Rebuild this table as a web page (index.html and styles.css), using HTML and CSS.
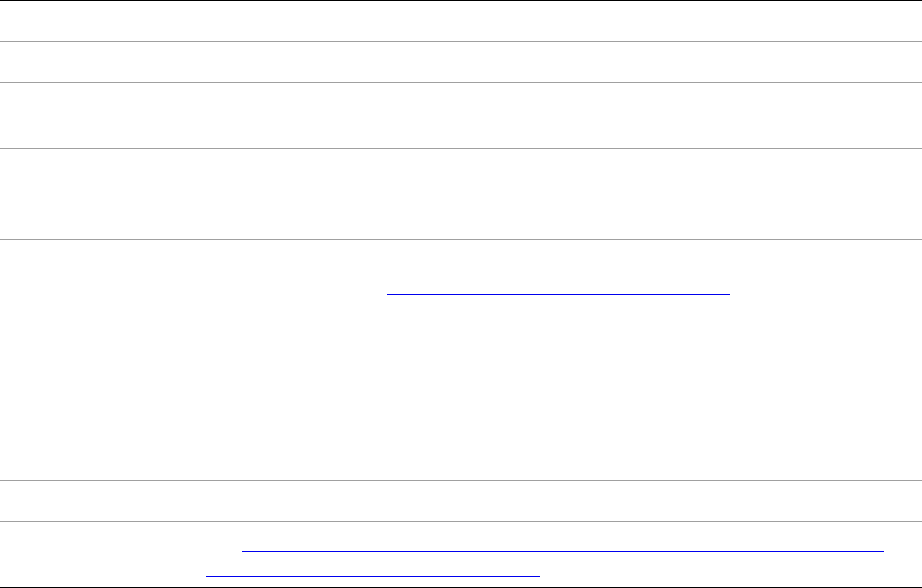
FILE: index.html
```html
<!DOCTYPE html>
<html lang="en">
<head>
<meta charset="utf-8">
<title>Details</title>
<link rel="stylesheet" href="styles.css">
</head>
<body>
<table class="spec">
  <colgroup><col class="c-key"><col class="c-val"></colgroup>
  <tbody>
    <tr><td><div class="ln">Name</div></td><td><div class="ln">Entry</div></td></tr>
    <tr><td><div class="ln">Type</div></td><td><div class="ln">Record</div></td></tr>
    <tr><td><div class="ln">Summary</div></td><td><div class="ln">First line</div><div class="ln">Second line</div></td></tr>
    <tr><td><div class="ln">Description</div></td><td><div class="ln">First line</div><div class="ln">Second line</div><div class="ln">Third line</div></td></tr>
    <tr>
      <td><div class="ln">Notes</div></td>
      <td>
        <div class="ln">Notes line</div>
        <div class="ln"><span class="lead lead-a">See</span><a class="seg seg-a" href="#">reference link</a></div>
        <div class="ln">Line 3</div>
        <div class="ln">Line 4</div>
        <div class="ln">Line 5</div>
        <div class="ln">Line 6</div>
        <div class="ln">Line 7</div>
        <div class="ln">Line 8</div>
        <div class="ln">Line 9</div>
      </td>
    </tr>
    <tr><td><div class="ln">Status</div></td><td><div class="ln">Active</div></td></tr>
    <tr>
      <td><div class="ln">Source</div></td>
      <td>
        <div class="ln"><span class="lead lead-b">At</span><a class="seg seg-b" href="#">source link</a></div>
        <div class="ln"><a class="seg seg-c" href="#">continued</a></div>
      </td>
    </tr>
  </tbody>
</table>
</body>
</html>
```
FILE: styles.css
```css
html, body {
  margin: 0;
  padding: 0;
  background: #ffffff;
}

body {
  font-family: "Liberation Sans", Arial, sans-serif;
  font-size: 16px;
  color: #ffffff;
}

.spec {
  width: 100%;
  border-collapse: collapse;
  table-layout: fixed;
  border-top: 1px solid #000000;
  border-bottom: 1px solid #000000;
}

.c-key { width: 198px; }

.spec td {
  padding: 7px 8px 8px 8px;
  vertical-align: top;
  border-bottom: 1px solid #a0a0a0;
}

.spec tr:last-child td {
  border-bottom: 1px solid #000000;
}

.ln {
  height: 25px;
  line-height: 25px;
  white-space: nowrap;
  overflow: hidden;
}

.lead {
  display: inline-block;
  vertical-align: top;
  height: 22px;
  overflow: hidden;
}

.lead-a { width: 181px; }
.lead-b { width: 36px; }

.seg {
  display: inline-block;
  vertical-align: top;
  height: 22px;
  line-height: 22px;
  overflow: hidden;
  color: #ffffff;
  text-decoration: none;
  border-bottom: 1px solid #0000ee;
}

.seg-a { width: 343px; }
.seg-b { width: 642px; }
.seg-c { width: 334px; }
```
